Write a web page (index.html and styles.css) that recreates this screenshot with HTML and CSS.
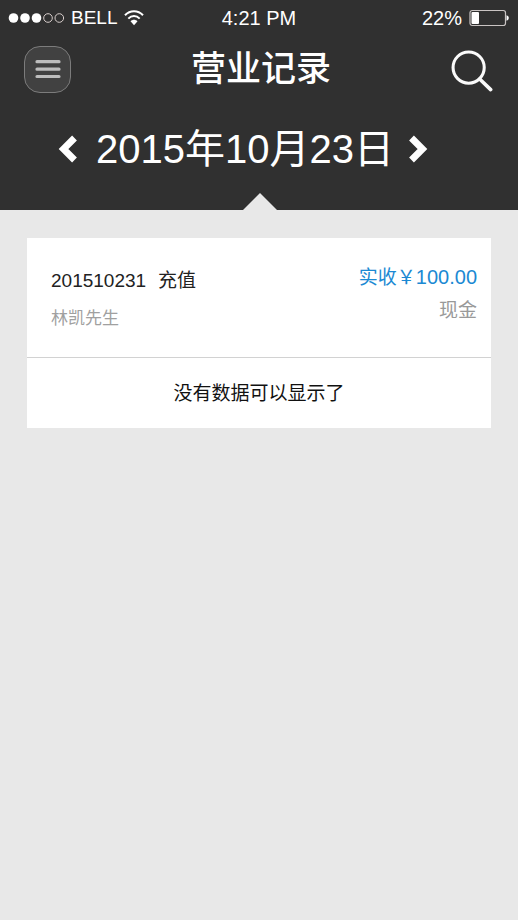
FILE: index.html
```html
<!DOCTYPE html>
<html lang="zh-CN">
<head>
<meta charset="utf-8">
<meta name="viewport" content="width=device-width, initial-scale=1">
<title>营业记录</title>
<link rel="stylesheet" href="styles.css">
</head>
<body>
<header class="header">
  <div class="status">
    <div class="status-side">
      <svg class="signal" width="56" height="12" viewBox="0 0 56 12" aria-hidden="true">
        <g fill="#fff"><circle cx="5.500" cy="6" r="4.800"/><circle cx="17" cy="6" r="4.800"/><circle cx="28.500" cy="6" r="4.800"/></g>
        <g fill="none" stroke="#d8cecc" stroke-width="1"><circle cx="40" cy="6" r="4.300"/><circle cx="51.300" cy="6" r="4.300"/></g>
      </svg>
      <span class="carrier">BELL</span>
      <svg class="wifi" width="20" height="16" viewBox="0 0 20 16" aria-hidden="true">
        <g fill="none" stroke="#fff" stroke-width="2"><path d="M1 5.200C6-.2 14-.2 19 5.200"/><path d="M4.300 8.600c3.300-3.400 8.100-3.400 11.400 0"/></g>
        <path d="M6.500 11.300c2-2 5-2 7 0L10 15.300z" fill="#fff"/>
      </svg>
    </div>
    <time class="clock">4:21 PM</time>
    <div class="status-side status-end">
      <span class="level">22%</span>
      <svg width="41" height="18" viewBox="0 0 41 18" aria-hidden="true">
        <rect x="1" y="1.500" width="35.500" height="15" rx="2.200" fill="none" stroke="#c9c4c3" stroke-width="1.200"/>
        <rect x="2.500" y="3" width="7.500" height="12" rx="1" fill="#fff"/>
        <path d="M37.500 6.300c3 .6 3 4.800 0 5.400z" fill="#fff"/>
      </svg>
    </div>
  </div>
  <div class="titlebar">
    <button class="menu" type="button" aria-label="菜单">
      <svg width="26" height="20" viewBox="0 0 26 20" aria-hidden="true"><path d="M2 2.700h22M2 10.200h22M2 17.500h22" stroke="#bdbdbd" stroke-width="3.200" stroke-linecap="round"/></svg>
    </button>
    <h1 class="title">营业记录</h1>
    <button class="search" type="button" aria-label="搜索">
      <svg width="46" height="46" viewBox="0 0 46 46" fill="none" stroke="#fafafa" aria-hidden="true"><circle cx="19.500" cy="21.500" r="16.300" stroke-width="3.200"/><path d="M31 33.500l11.500 11" stroke-width="3.800" stroke-linecap="round"/></svg>
    </button>
  </div>
  <nav class="datebar" aria-label="日期">
    <button class="arrow" type="button" aria-label="前一天">
      <svg width="20" height="30" viewBox="0 0 20 30" aria-hidden="true"><path d="M16.500 4L5.500 15l11 11" fill="none" stroke="#fff" stroke-width="6.800"/></svg>
    </button>
    <h2 class="date">2015年10月23日</h2>
    <button class="arrow" type="button" aria-label="后一天">
      <svg width="20" height="30" viewBox="0 0 20 30" aria-hidden="true"><path d="M3.500 4l11 11-11 11" fill="none" stroke="#fff" stroke-width="6.800"/></svg>
    </button>
  </nav>
  <div class="pointer"></div>
</header>
<main class="content">
  <section class="card">
    <article class="record">
      <div class="record-main">
        <p class="order"><span>201510231</span><span>充值</span></p>
        <p class="customer">林凯先生</p>
      </div>
      <div class="record-pay">
        <p class="amount">实收￥<span class="num">100.00</span></p>
        <p class="method">现金</p>
      </div>
    </article>
    <p class="empty">没有数据可以显示了</p>
  </section>
</main>
</body>
</html>
```
FILE: styles.css
```css
* { box-sizing: border-box; }

body {
  margin: 0;
  min-height: 100vh;
  background: #e8e8e8;
  color: #222;
  font-family: "Liberation Sans", "Noto Sans CJK SC", sans-serif;
  font-size: 19px;
}

h1, h2, p { margin: 0; font-weight: 400; }

button {
  display: flex;
  align-items: center;
  justify-content: center;
  padding: 0;
  border: 0;
  background: none;
}

.header {
  position: relative;
  background: #303030;
  color: #fff;
}

.status {
  display: grid;
  grid-template-columns: 1fr auto 1fr;
  align-items: center;
  height: 36px;
  padding: 0 8px;
  line-height: 24px;
}

.status-side { display: flex; align-items: center; gap: 7px; }
.status-end { justify-content: flex-end; }
.carrier { font-size: 19px; }
.level { font-size: 20px; }
.clock { font-size: 20px; }

.titlebar {
  display: grid;
  grid-template-columns: 48px 1fr 44px;
  align-items: center;
  height: 66px;
  padding: 0 24px;
}

.menu {
  width: 47px;
  height: 47px;
  border: 1px solid #7c7c7c;
  border-radius: 16px;
  background: #414141;
}

.title {
  font-size: 35px;
  font-weight: 500;
  line-height: 48px;
  text-align: center;
}

.datebar {
  display: flex;
  align-items: center;
  justify-content: center;
  height: 108px;
  padding: 0 32px 14px 0;
}

.date {
  margin: 0 14px 0 18px;
  font-size: 40px;
  line-height: 56px;
  white-space: nowrap;
}

.pointer {
  position: absolute;
  bottom: 0;
  left: 50%;
  width: 34px;
  height: 17px;
  margin-left: -16px;
  background: #e8e8e8;
  clip-path: polygon(50% 0, 100% 100%, 0 100%);
}

.content { padding: 28px 27px; }
.card { background: #fff; }

.record {
  display: flex;
  justify-content: space-between;
  min-height: 120px;
  padding: 23px 14px 23px 24px;
  border-bottom: 1px solid #d2d2d2;
}

.num { font-size: 20px; }
.record-main { padding-top: 4px; }
.order { display: flex; gap: 12px; line-height: 32px; }
.customer { padding-top: 8px; font-size: 17px; line-height: 28px; color: #a0a0a0; }
.record-pay { text-align: right; }
.amount { line-height: 32px; color: #1b89d3; }
.method { line-height: 34px; color: #999; }
.empty { padding-top: 2px; line-height: 68px; text-align: center; color: #111; }
```
